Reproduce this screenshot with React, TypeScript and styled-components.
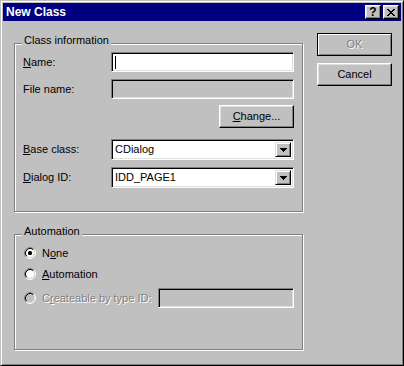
import styled, { createGlobalStyle, css } from 'styled-components'

const GlobalStyle = createGlobalStyle`
  html, body {
    margin: 0;
    padding: 0;
    background: #c0c0c0;
  }
  body {
    font-family: "Liberation Sans", Arial, sans-serif;
    font-size: 11px;
  }
`

const Radio = ({ checked, disabled }: { checked?: boolean; disabled?: boolean }) => (
  <RadioBox width="12" height="12" viewBox="0 0 12 12">
    <circle cx="6" cy="6" r="4" fill={disabled ? '#c0c0c0' : '#fff'} />
    <path d="M2.11 9.89 A5.5 5.5 0 0 1 9.89 2.11" stroke="#808080" fill="none" />
    <path d="M9.89 2.11 A5.5 5.5 0 0 1 2.11 9.89" stroke="#fff" fill="none" />
    <path d="M2.82 9.18 A4.5 4.5 0 0 1 9.18 2.82" stroke="#000" fill="none" />
    <path d="M9.18 2.82 A4.5 4.5 0 0 1 2.82 9.18" stroke="#dfdfdf" fill="none" />
    {checked && <rect x="4" y="4" width="4" height="4" rx="1.5" fill="#000" />}
  </RadioBox>
)

const CloseGlyph = () => (
  <svg width="8" height="7" viewBox="0 0 8 7" shapeRendering="crispEdges">
    <path
      d="M0 0h2v1H0zM6 0h2v1H6zM1 1h2v1H1zM5 1h2v1H5zM2 2h4v1H2zM3 3h2v1H3zM2 4h4v1H2zM1 5h2v1H1zM5 5h2v1H5zM0 6h2v1H0zM6 6h2v1H6z"
      fill="#000"
    />
  </svg>
)

const ArrowGlyph = () => (
  <svg width="7" height="4" viewBox="0 0 7 4" shapeRendering="crispEdges">
    <path d="M0 0h7v1H0zM1 1h5v1H1zM2 2h3v1H2zM3 3h1v1H3z" fill="#000" />
  </svg>
)

const Combo = ({ value }: { value: string }) => (
  <Field $height={21}>
    <FieldText>{value}</FieldText>
    <ArrowButton>
      <ArrowGlyph />
    </ArrowButton>
  </Field>
)

const App = () => {
  return (
    <>
      <GlobalStyle />
      <Window>
        <TitleBar>
          <Title>New Class</Title>
          <TitleButtons>
            <TitleButton>?</TitleButton>
            <TitleButton>
              <CloseGlyph />
            </TitleButton>
          </TitleButtons>
        </TitleBar>
        <Body>
          <LeftCol>
            <Group $height={169}>
              <GroupLabel>Class information</GroupLabel>
              <FormRow $mt={0} $height={20}>
                <Label><u>N</u>ame:</Label>
                <Field $height={20}>
                  <Caret />
                </Field>
              </FormRow>
              <FormRow $mt={7} $height={20}>
                <Label>File name:</Label>
                <Field $height={20} $disabled />
              </FormRow>
              <FormRow $mt={6} $height={23}>
                <span />
                <Button $width={75} $end>
                  <u>C</u>hange...
                </Button>
              </FormRow>
              <FormRow $mt={11} $height={21}>
                <Label><u>B</u>ase class:</Label>
                <Combo value="CDialog" />
              </FormRow>
              <FormRow $mt={7} $height={21}>
                <Label><u>D</u>ialog ID:</Label>
                <Combo value="IDD_PAGE1" />
              </FormRow>
            </Group>
            <Group $height={116} $gap={22} $padTop={10}>
              <GroupLabel>Automation</GroupLabel>
              <RadioRow $mt={0}>
                <Radio checked />
                <Label>N<u>o</u>ne</Label>
              </RadioRow>
              <RadioRow $mt={5}>
                <Radio />
                <Label><u>A</u>utomation</Label>
              </RadioRow>
              <RadioRow $mt={6} $height={20}>
                <Radio disabled />
                <Label $disabled>C<u>r</u>eateable by type ID:</Label>
                <Field $height={20} $width={136} $disabled $push />
              </RadioRow>
            </Group>
          </LeftCol>
          <RightCol>
            <Button $width={75} $default $disabled>OK</Button>
            <Button $width={75}>Cancel</Button>
          </RightCol>
        </Body>
      </Window>
    </>
  )
}

export default App

const Window = styled.div`
  width: 404px;
  height: 366px;
  box-sizing: border-box;
  padding: 2px;
  border: 1px solid;
  border-color: #c0c0c0 #000 #000 #c0c0c0;
  box-shadow: inset 1px 1px 0 #fff, inset -1px -1px 0 #808080;
  background: #c0c0c0;
  display: flex;
  flex-direction: column;
`

const TitleBar = styled.div`
  height: 18px;
  background: #000080;
  display: flex;
  align-items: center;
  justify-content: space-between;
  padding: 0 2px 0 3px;
`

const Title = styled.span`
  color: #fff;
  font-weight: bold;
  font-size: 12px;
  line-height: 14px;
`

const TitleButtons = styled.div`
  display: flex;
  gap: 2px;
`

const TitleButton = styled.div`
  width: 16px;
  height: 14px;
  box-sizing: border-box;
  border: 1px solid;
  border-color: #fff #000 #000 #fff;
  box-shadow: inset -1px -1px 0 #808080, inset 1px 1px 0 #dfdfdf;
  background: #c0c0c0;
  display: flex;
  align-items: center;
  justify-content: center;
  font-weight: bold;
  font-size: 12px;
  line-height: 11px;
  color: #000;
`

const Body = styled.div`
  display: flex;
  padding-left: 11px;
`

const LeftCol = styled.div`
  width: 289px;
  padding-top: 22px;
  display: flex;
  flex-direction: column;
`

const RightCol = styled.div`
  margin-left: 14px;
  padding-top: 12px;
  display: flex;
  flex-direction: column;
  gap: 7px;
`

const Group = styled.div<{ $height: number; $gap?: number; $padTop?: number }>`
  position: relative;
  box-sizing: border-box;
  height: ${p => p.$height}px;
  margin-top: ${p => p.$gap ?? 0}px;
  border: 1px solid #808080;
  box-shadow: inset 1px 1px 0 #fff, 1px 1px 0 #fff;
  padding: ${p => p.$padTop ?? 8}px 8px 0 8px;
  display: flex;
  flex-direction: column;
`

const GroupLabel = styled.span`
  position: absolute;
  top: -10px;
  left: 7px;
  padding: 0 2px;
  background: #c0c0c0;
  line-height: 13px;
  color: #000;
`

const FormRow = styled.div<{ $mt: number; $height: number }>`
  display: grid;
  grid-template-columns: 88px 183px;
  align-items: center;
  height: ${p => p.$height}px;
  margin-top: ${p => p.$mt}px;
`

const Label = styled.span<{ $disabled?: boolean }>`
  line-height: 13px;
  color: ${p => (p.$disabled ? '#808080' : '#000')};
  text-shadow: ${p => (p.$disabled ? '1px 1px 0 #fff' : 'none')};
  white-space: nowrap;

  u {
    text-decoration-thickness: 1px;
    text-underline-offset: 1px;
  }
`

const sunken = css`
  box-sizing: border-box;
  border: 1px solid;
  border-color: #808080 #fff #fff #808080;
  box-shadow: inset 1px 1px 0 #000, inset -1px -1px 0 #dfdfdf;
`

const Field = styled.div<{ $height: number; $width?: number; $disabled?: boolean; $push?: boolean }>`
  ${sunken};
  height: ${p => p.$height}px;
  width: ${p => (p.$width ? `${p.$width}px` : 'auto')};
  margin-left: ${p => (p.$push ? 'auto' : '0')};
  background: ${p => (p.$disabled ? '#c0c0c0' : '#fff')};
  padding: 2px;
  display: flex;
  align-items: center;
`

const FieldText = styled.span`
  flex: 1;
  padding-left: 1px;
  line-height: 13px;
  color: #000;
`

const Caret = styled.span`
  width: 1px;
  height: 13px;
  margin-left: 1px;
  background: #000;
`

const ArrowButton = styled.div`
  width: 16px;
  height: 100%;
  box-sizing: border-box;
  border: 1px solid;
  border-color: #dfdfdf #000 #000 #dfdfdf;
  box-shadow: inset 1px 1px 0 #fff, inset -1px -1px 0 #808080;
  background: #c0c0c0;
  display: flex;
  align-items: center;
  justify-content: center;
`

const Button = styled.div<{ $width: number; $default?: boolean; $disabled?: boolean; $end?: boolean }>`
  width: ${p => p.$width}px;
  height: 23px;
  box-sizing: border-box;
  justify-self: ${p => (p.$end ? 'end' : 'auto')};
  background: #c0c0c0;
  display: flex;
  align-items: center;
  justify-content: center;
  line-height: 13px;
  color: ${p => (p.$disabled ? '#808080' : '#000')};
  text-shadow: ${p => (p.$disabled ? '1px 1px 0 #fff' : 'none')};
  ${p =>
    p.$default
      ? css`
          border: 1px solid #000;
          box-shadow: inset 1px 1px 0 #fff, inset -1px -1px 0 #808080;
        `
      : css`
          border: 1px solid;
          border-color: #fff #000 #000 #fff;
          box-shadow: inset -1px -1px 0 #808080, inset 1px 1px 0 #dfdfdf;
        `}

  u {
    text-decoration-thickness: 1px;
    text-underline-offset: 1px;
  }
`

const RadioRow = styled.div<{ $mt: number; $height?: number }>`
  display: flex;
  align-items: center;
  gap: 6px;
  height: ${p => p.$height ?? 16}px;
  margin-top: ${p => p.$mt}px;
`

const RadioBox = styled.svg`
  flex: none;
  margin-left: 1px;
`
